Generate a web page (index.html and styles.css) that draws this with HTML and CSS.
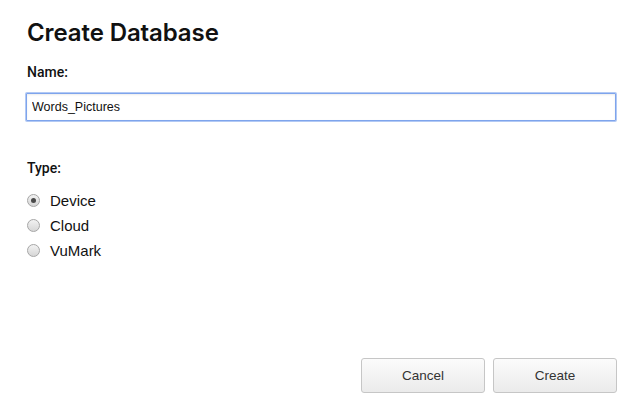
FILE: index.html
```html
<!DOCTYPE html>
<html>
<head>
<meta charset="utf-8">
<link rel="stylesheet" href="styles.css">
</head>
<body>
<div class="dialog">
  <h1 class="title">Create Database</h1>
  <label class="field-label name-label" for="name">Name:</label>
  <input class="text-input" id="name" type="text" value="Words_Pictures">
  <div class="field-label type-label">Type:</div>
  <div class="radio-group">
    <label class="radio-row"><input type="radio" name="type" class="radio" checked><span>Device</span></label>
    <label class="radio-row"><input type="radio" name="type" class="radio"><span>Cloud</span></label>
    <label class="radio-row"><input type="radio" name="type" class="radio"><span>VuMark</span></label>
  </div>
  <div class="actions">
    <button class="btn">Cancel</button>
    <button class="btn">Create</button>
  </div>
</div>
</body>
</html>
```
FILE: styles.css
```css
html, body {
  margin: 0;
  padding: 0;
  background: #ffffff;
}
.dialog {
  box-sizing: border-box;
  height: 413px;
  padding: 19px 20px 20px 26px;
  display: flex;
  flex-direction: column;
  font-family: "Liberation Sans", Arial, sans-serif;
  color: #111;
}
.title {
  margin: 0 0 0 1px;
  font-family: Inter, "Liberation Sans", sans-serif;
  font-weight: 600;
  font-size: 24px;
  line-height: 28px;
  color: #111;
  letter-spacing: -0.1px;
}
.field-label {
  display: block;
  margin: 0 0 0 1px;
  font-family: Roboto, "Liberation Sans", sans-serif;
  font-weight: 500;
  font-size: 14px;
  line-height: 16px;
  color: #111;
}
.name-label {
  margin-top: 17px;
}
.text-input {
  box-sizing: border-box;
  margin-top: 13px;
  height: 28px;
  width: 100%;
  padding: 0 5px;
  border: 1px solid #7ea4ec;
  border-radius: 1px;
  box-shadow: 0 0 0 1px #b2c9f4, inset 0 1px 2px rgba(0,0,0,0.08);
  font-family: "Liberation Sans", Arial, sans-serif;
  font-size: 12.5px;
  color: #111;
  outline: none;
  background: #fff;
}
.type-label {
  margin-top: 39px;
}
.radio-group {
  margin-top: 12px;
  display: flex;
  flex-direction: column;
}
.radio-row {
  display: flex;
  align-items: center;
  height: 25px;
  gap: 10px;
  font-family: "Liberation Sans", Arial, sans-serif;
  font-size: 15px;
  color: #111;
}
.radio {
  appearance: none;
  -webkit-appearance: none;
  box-sizing: border-box;
  margin: 0 0 0 1px;
  width: 13px;
  height: 13px;
  border-radius: 50%;
  border: 1px solid #a6a6a6;
  background: linear-gradient(#f2f2f2, #d6d6d6);
  position: relative;
}
.radio:checked::after {
  content: "";
  position: absolute;
  left: 3px;
  top: 3px;
  width: 5px;
  height: 5px;
  border-radius: 50%;
  background: #4a4a4a;
}
.actions {
  margin-top: auto;
  margin-right: -1px;
  display: flex;
  justify-content: flex-end;
  gap: 8px;
}
.btn {
  box-sizing: border-box;
  width: 124px;
  height: 35px;
  border: 1px solid #c6c6c6;
  border-radius: 3px;
  background: linear-gradient(#fbfbfb, #ebebeb);
  font-family: "Liberation Sans", Arial, sans-serif;
  font-size: 13.5px;
  color: #333;
  padding: 0;
}
```
